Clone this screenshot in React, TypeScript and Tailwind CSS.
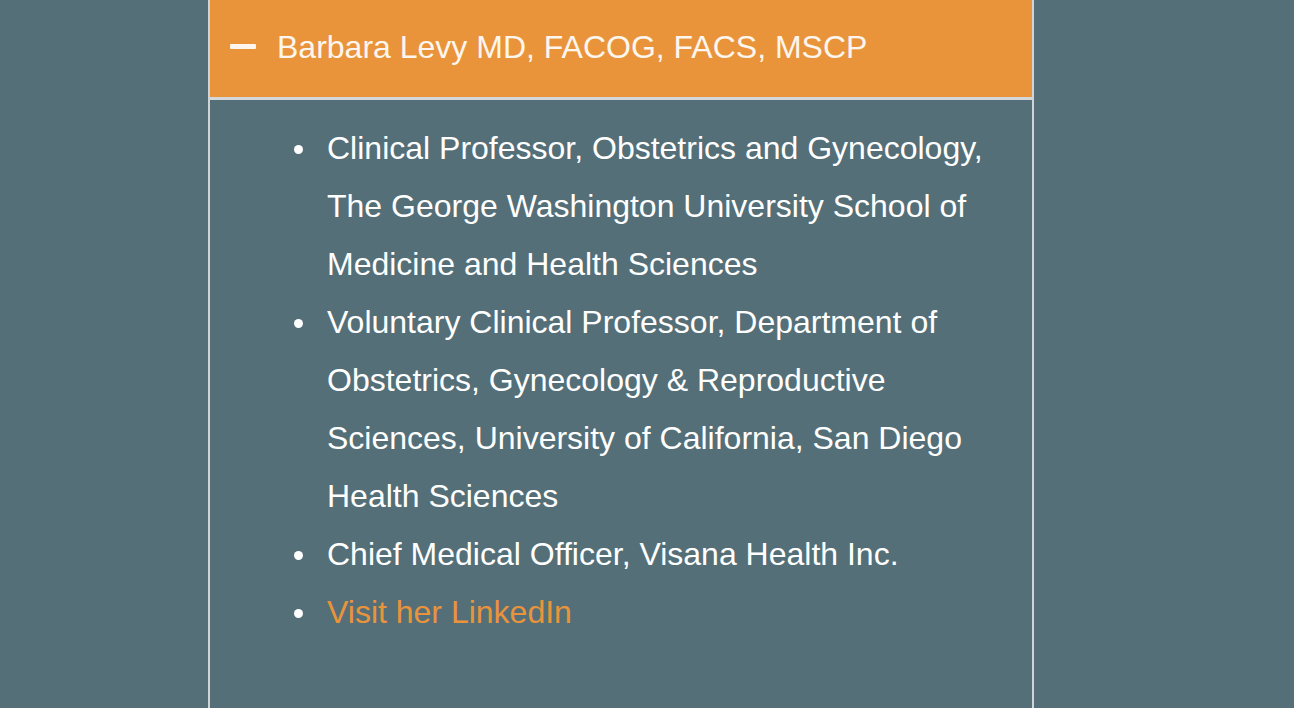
const items: { text: string; link?: boolean }[] = [
  { text: "Clinical Professor, Obstetrics and Gynecology, The George Washington University School of Medicine and Health Sciences" },
  { text: "Voluntary Clinical Professor, Department of Obstetrics, Gynecology & Reproductive Sciences, University of California, San Diego Health Sciences" },
  { text: "Chief Medical Officer, Visana Health Inc." },
  { text: "Visit her LinkedIn", link: true },
]

export default function App() {
  return (
    <div
      className="min-h-[708px] bg-[#546f78] flex"
      style={{ fontFamily: '"Liberation Sans", Arial, sans-serif' }}
    >
      <div className="ml-[208px] w-[826px] min-h-[708px] border-x-2 border-[#cfd4d7]">
        <div className="h-[100px] bg-[#e9943b] flex items-center pl-[20px] pb-[4px] border-b-[3px] border-[#d3d7da] box-border">
          <span className="block w-[26px] h-[5px] rounded-[1px] bg-[#fdf6ee]" />
          <span className="ml-[21px] text-[32px] text-[#fdf6ee]">Barbara Levy MD, FACOG, FACS, MSCP</span>
        </div>
        <ul className="pt-[19px] pl-[84px] pr-[30px] pb-10">
          {items.map((item, i) => (
            <li key={i} className="flex text-[32px] leading-[58px]">
              <span className="w-[33px] shrink-0 flex justify-start pt-[26px]">
                <span className="block w-[9px] h-[9px] rounded-full bg-white" />
              </span>
              {item.link ? (
                <a href="#" className="text-[#e9943b]">{item.text}</a>
              ) : (
                <span className="text-white">{item.text}</span>
              )}
            </li>
          ))}
        </ul>
      </div>
    </div>
  )
}
